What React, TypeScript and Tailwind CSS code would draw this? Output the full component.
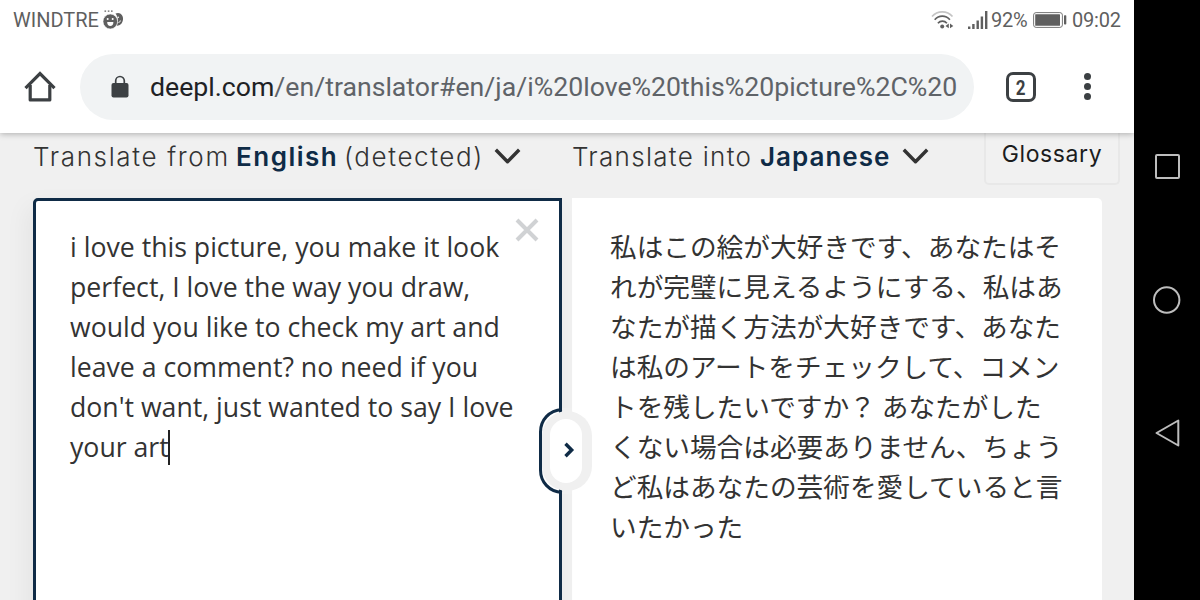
import type { ReactNode } from "react";

function HomeIcon() {
  return (
    <svg width="32" height="32" viewBox="0 0 32 32" fill="none" stroke="#3c4043" strokeWidth="3.2" strokeLinejoin="round">
      <path d="M1.5 17.2 16 2.6l14.500 14.600" strokeLinejoin="miter" />
      <path d="M6.200 14v14.900h19.600V14" />
    </svg>
  );
}

function LockIcon() {
  return (
    <svg width="18" height="24" viewBox="0 0 18 24" fill="none">
      <rect x="0.500" y="8" width="17" height="14.500" rx="2" fill="#3c4043" />
      <path d="M4.700 9V5.800a4.300 4.300 0 0 1 8.600 0V9" stroke="#3c4043" strokeWidth="1.700" />
    </svg>
  );
}

function FacesIcon() {
  return (
    <svg width="21" height="20" viewBox="0 0 21 20">
      <path d="M12.500 3.500C17 1.500 20.500 5 20 9.500c-.4 4-3.200 6.500-6.500 6.200 2-3.500 2-8-1-12.200z" fill="#5f5f5f" />
      <circle cx="15.200" cy="7.300" r="0.800" fill="#fff" />
      <path d="M15.500 12.500c1 0 1.700-.8 1.800-2" stroke="#fff" strokeWidth="1" fill="none" />
      <ellipse cx="7.300" cy="11.500" rx="7.300" ry="7.500" fill="#5f5f5f" stroke="#fff" strokeWidth="0.600" />
      <circle cx="4.700" cy="9" r="1" fill="#fff" />
      <circle cx="9.700" cy="9" r="1" fill="#fff" />
      <path d="M4.200 12h6.200c0 2.600-1.200 4-3.100 4s-3.100-1.400-3.100-4z" fill="#fff" />
      <path d="M1.500 1.200h1.600M4.800 1.200h1.600M8 1.200h1.600" stroke="#5f5f5f" strokeWidth="1.200" />
    </svg>
  );
}

function WifiIcon() {
  return (
    <svg width="24" height="20" viewBox="0 0 24 20" fill="none" strokeWidth="1.700">
      <path d="M1 6.500C6.500 0.300 16 0.300 21.500 6.500" stroke="#c4c4c4" />
      <path d="M3.700 9.700c4.200-4.800 11-4.800 15.200 0" stroke="#5f5f5f" />
      <path d="M6.900 13.200c2.500-2.900 6.500-2.900 9 0" stroke="#5f5f5f" />
      <circle cx="11.200" cy="16.400" r="2" fill="#5f5f5f" />
      <path d="M17.800 13.500v4.800l-3.300-2.400zM19 13.500v4.800l3.300-2.400z" fill="#5f5f5f" />
    </svg>
  );
}

function SignalIcon() {
  return (
    <svg width="20" height="19" viewBox="0 0 20 19" fill="#5f5f5f">
      <rect x="0" y="15.500" width="2.400" height="2.500" />
      <rect x="4.200" y="13" width="2.400" height="5" />
      <rect x="8.500" y="9.500" width="2.400" height="8.500" />
      <rect x="12.700" y="5.500" width="2.400" height="12.500" />
      <rect x="17" y="0" width="2.400" height="18" />
    </svg>
  );
}

function BatteryIcon() {
  return (
    <svg width="34" height="16" viewBox="0 0 34 16">
      <rect x="0.600" y="0.600" width="28.800" height="14.800" rx="2.500" fill="#fff" stroke="#777" strokeWidth="1" />
      <rect x="2.200" y="2.200" width="24.800" height="11.600" rx="0.500" fill="#5f5f5f" />
      <rect x="31" y="3.200" width="2.300" height="9.200" rx="0.700" fill="#5f5f5f" />
    </svg>
  );
}

function ChevronDown() {
  return (
    <svg width="27" height="18" viewBox="0 0 27 18" fill="none" stroke="#333" strokeWidth="3.400" strokeLinejoin="round">
      <path d="m1.800 2.700 11.700 12 11.700-12" />
    </svg>
  );
}

function SwapHandle() {
  return (
    <svg width="54" height="88" viewBox="0 0 54 88" fill="none">
      <path d="M24 1H34V87H24z" fill="#f0f0f0" />
      <rect x="4" y="4" width="50" height="80" rx="25" fill="#f0f0f0" />
      <path d="M24 2.500C11 3.500 2.500 13 2.500 25V63c0 12 8.500 21.500 21.500 22.500" stroke="#0f2b46" strokeWidth="3" />
      <rect x="12" y="12" width="32" height="64" rx="16" fill="#fff" />
      <path d="m27.500 36.700 6.200 6.300-6.200 6.300" stroke="#0f2b46" strokeWidth="3.400" />
    </svg>
  );
}

function Panel({ className, children }: { className: string; children: ReactNode }) {
  return <section className={`h-[420px] shrink-0 bg-white text-[26.67px] leading-[40px] text-[#333] ${className}`}>{children}</section>;
}

const source = [
  "i love this picture, you make it look",
  "perfect, I love the way you draw,",
  "would you like to check my art and",
  "leave a comment? no need if you",
  "don't want, just wanted to say I love",
  "your art",
];

const translation = [
  "私はこの絵が大好きです、あなたはそ",
  "れが完璧に見えるようにする、私はあ",
  "なたが描く方法が大好きです、あなた",
  "は私のアートをチェックして、コメン",
  "トを残したいですか？ あなたがした",
  "くない場合は必要ありません、ちょう",
  "ど私はあなたの芸術を愛していると言",
  "いたかった",
];

export default function App() {
  return (
    <div className="flex h-[600px] w-[1200px] overflow-hidden bg-black">
      <main className="flex w-[1134px] flex-col overflow-hidden bg-[#f0f0f0]">
        {/* Browser chrome */}
        <header className="z-10 h-[133px] shrink-0 bg-white font-['Roboto',sans-serif] shadow-[0_1px_6px_rgba(0,0,0,0.28)]">
          <div className="flex h-[40px] items-center pl-[13px] pr-[13px] text-[20px] text-[#5f5f5f]">
            <span className="w-[90px] whitespace-nowrap">WINDTRE</span>
            <FacesIcon />
            <div className="ml-auto flex items-center">
              <WifiIcon />
              <span className="ml-[13px] mr-[3px]">
                <SignalIcon />
              </span>
              <span className="w-[42px] whitespace-nowrap tracking-[-0.300px]">92%</span>
              <BatteryIcon />
              <span className="ml-[5px] w-[49px] whitespace-nowrap tracking-[-0.200px]">09:02</span>
            </div>
          </div>
          <div className="flex h-[93px] items-center pl-[24px]">
            <HomeIcon />
            <div className="ml-[24px] flex h-[66px] w-[894px] items-center rounded-full bg-[#f1f3f4] pl-[31px]">
              <LockIcon />
              <span className="ml-[21px] mt-px whitespace-nowrap text-[26.67px] text-[#5f6368]">
                <span className="text-[#202124]">deepl.com</span>/en/translator#en/ja/i%20love%20this%20picture%2C%20
              </span>
            </div>
            <div className="ml-[32px] flex size-[30px] items-center justify-center rounded-[7px] border-3 border-[#3c4043] pt-[2px] text-[20px] font-bold text-[#3c4043]">
              <span className="scale-x-85">2</span>
            </div>
            <div className="ml-[48px] flex flex-col gap-[3.500px]">
              <i className="size-[6.500px] rounded-full bg-[#3c4043]" />
              <i className="size-[6.500px] rounded-full bg-[#3c4043]" />
              <i className="size-[6.500px] rounded-full bg-[#3c4043]" />
            </div>
          </div>
        </header>

        {/* Language bar */}
        <div className="flex h-[65px] shrink-0 pl-[33px] font-['Inter',sans-serif] text-[26px] font-light text-[#333]">
          <div className="flex h-[46px] w-[539px] items-center whitespace-nowrap">
            <span className="w-[203px] tracking-[1.650px]">Translate from</span>
            <b className="w-[108px] font-semibold tracking-[1.500px] text-[#0f2b46]">English</b>
            <span className="w-[150px] tracking-[1.600px]">(detected)</span>
            <ChevronDown />
          </div>
          <div className="flex h-[46px] w-[412px] items-center whitespace-nowrap">
            <span className="w-[188px] tracking-[1.300px]">Translate into</span>
            <b className="w-[142px] font-semibold tracking-[1px] text-[#0f2b46]">Japanese</b>
            <ChevronDown />
          </div>
          <button className="h-[52px] w-[136px] rounded-b-[5px] border-2 border-t-0 border-[#e8e8e8] bg-[#f1f1f1] pb-[7px] text-[23px] font-normal tracking-[0.600px] text-[#1b1c1d]">
            Glossary
          </button>
        </div>

        {/* Source and translation */}
        <div className="relative flex gap-[10px] pl-[33px]">
          <Panel className="relative w-[529px] rounded-tl-[5px] border-3 border-[#0f2b46] pl-[34px] pt-[26px] font-['Open_Sans',sans-serif] shadow-[-6px_8px_24px_rgba(0,0,0,0.05)]">
            {source.map((line, i) => (
              <p key={line} className="flex whitespace-nowrap">
                {line}
                {i === source.length - 1 && <i className="-ml-px mt-[3px] h-[35px] w-[2px] bg-[#222]" />}
              </p>
            ))}
            <svg className="absolute right-[20px] top-[17px]" width="24" height="24" viewBox="0 0 24 24" stroke="#d0d2d4" strokeWidth="4">
              <path d="m2 2 20 20M22 2 2 22" />
            </svg>
          </Panel>
          <Panel className="w-[530px] rounded-tr-[5px] pl-[38px] pt-[28px] font-['Noto_Sans_CJK_JP',sans-serif]">
            {translation.map((line) => (
              <p key={line} lang="ja" className="whitespace-nowrap">
                {line}
              </p>
            ))}
          </Panel>
          <div className="absolute left-[538px] top-[209px]">
            <SwapHandle />
          </div>
        </div>
      </main>

      {/* Android navigation */}
      <nav className="flex w-[66px] flex-col items-center pt-[153px]">
        <svg width="28" height="294" viewBox="0 0 28 294" fill="none" stroke="#bdbdbd" strokeWidth="2" strokeLinejoin="round">
          <rect x="3" y="2" width="23" height="23" rx="1" />
          <circle cx="13.700" cy="147" r="12.700" />
          <path d="M25.300 267.500v25L3.500 280z" />
        </svg>
      </nav>
    </div>
  );
}
